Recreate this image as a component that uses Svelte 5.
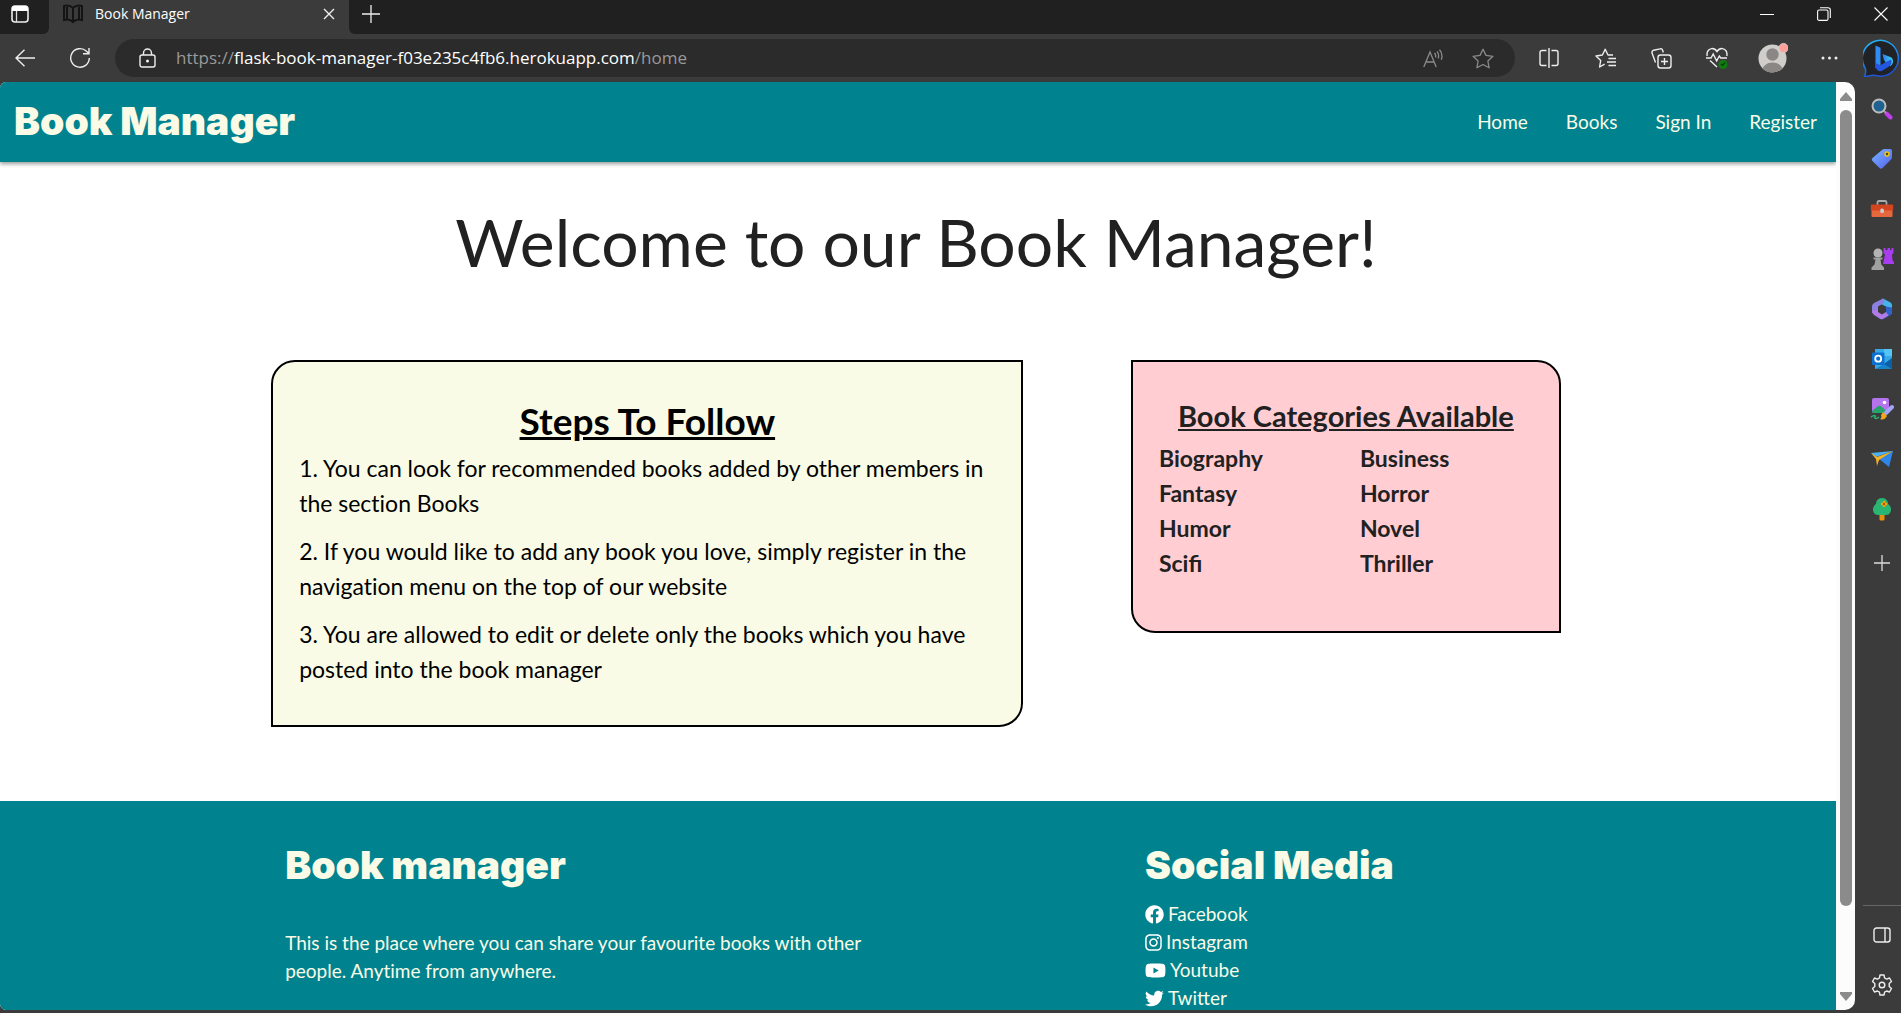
<script>
  const navLinks = ['Home', 'Books', 'Sign In', 'Register'];
  const steps = [
    '1. You can look for recommended books added by other members in the section Books',
    '2. If you would like to add any book you love, simply register in the navigation menu on the top of our website',
    '3. You are allowed to edit or delete only the books which you have posted into the book manager'
  ];
  const categories = ['Biography', 'Business', 'Fantasy', 'Horror', 'Humor', 'Novel', 'Scifi', 'Thriller'];
  const socials = [
    { name: 'Facebook', box: '0 0 512 512', width: 19, path: 'M504 256C504 119 393 8 256 8S8 119 8 256c0 124 91 226 209 245V328h-63v-72h63v-55c0-62 37-97 94-97 27 0 55 5 55 5v62h-31c-31 0-40 19-40 38v47h69l-11 72h-58v173c118-19 209-121 209-245z' },
    { name: 'Instagram', box: '0 0 448 512', width: 17, path: 'M224 141c-64 0-115 51-115 115s51 115 115 115 115-51 115-115-51-115-115-115zm0 190c-41 0-75-34-75-75s34-75 75-75 75 34 75 75-34 75-75 75zm146-194a27 27 0 1 1-54 0 27 27 0 0 1 54 0zm76 27c-2-36-10-68-36-94s-58-34-94-36c-37-2-148-2-185 0-36 2-67 10-94 36S3 128 1 164c-2 37-2 148 0 185 2 36 10 67 36 94s58 34 94 36c37 2 148 2 185 0 36-2 68-10 94-36s34-58 36-94c2-37 2-148 0-185zm-48 225c-8 19-23 34-42 42-29 11-99 9-132 9s-103 2-132-9c-19-8-34-23-42-42-11-29-9-99-9-133s-2-103 9-132c8-19 23-34 42-42 29-11 99-9 132-9s103-2 132 9c19 8 34 23 42 42 11 29 9 99 9 132s2 104-9 133z' },
    { name: 'Youtube', box: '0 0 576 512', width: 21, path: 'M549 124c-6-24-25-42-48-49-43-11-213-11-213-11S118 64 75 75c-23 7-42 25-48 49-12 43-12 132-12 132s0 90 12 133c6 23 25 41 48 47 43 12 213 12 213 12s171 0 213-12c23-6 42-24 48-47 12-43 12-133 12-133s0-89-12-132zM232 338V175l143 81-143 82z' },
    { name: 'Twitter', box: '0 0 512 512', width: 19, path: 'M459 152c0 4 0 9 0 14 0 138-105 298-298 298-59 0-114-17-161-47 8 1 16 1 25 1 49 0 94-16 130-45-46-1-85-31-98-72 7 1 13 1 20 1 9 0 19-1 27-3-48-10-84-52-84-103v-2c14 8 30 13 47 14-28-19-47-51-47-87 0-20 5-37 14-53 52 63 129 105 216 109-2-7-3-15-3-24 0-57 47-104 105-104 30 0 57 13 77 33 23-5 46-13 66-25-8 24-24 45-46 58 21-2 42-8 60-16-14 21-31 39-50 53z' }
  ];
</script>

<div class="window">
  <div class="tabstrip">
    <button class="strip-start" aria-label="Tab actions">
      <svg width="18" height="18" viewBox="0 0 18 18"><rect x="1" y="1" width="16" height="16" rx="3" fill="none" stroke="#eee" stroke-width="1.6" /><path d="M1 4a3 3 0 0 1 3-3h10a3 3 0 0 1 3 3v2H1z" fill="#fff" /><path d="M5.5 6v11" stroke="#ddd" stroke-width="1.3" /></svg>
    </button>
    <div class="tab">
      <svg width="20" height="20" viewBox="0 0 20 20" fill="none" stroke="#141414" stroke-width="2"><path d="M10 4v14M10 4C8 2 5 1 1 2v14c4-1 7 0 9 2 2-2 5-3 9-2V2c-4-1-7 0-9 2zM4 3v12M16 3v12" /></svg>
      <span>Book Manager</span>
      <button class="tab-close" aria-label="Close tab"><svg width="12" height="12" viewBox="0 0 12 12" stroke="#eee" stroke-width="1.4"><path d="M1 1l10 10M11 1L1 11" /></svg></button>
    </div>
    <div class="strip-end">
      <button class="new-tab" aria-label="New tab"><svg width="18" height="18" viewBox="0 0 18 18" stroke="#eee" stroke-width="1.3"><path d="M9 0v18M0 9h18" /></svg></button>
      <div class="controls">
        <button aria-label="Minimize"><svg width="14" height="14" viewBox="0 0 14 14" stroke="#fff"><path d="M0 7.5h14" /></svg></button>
        <button aria-label="Restore"><svg width="14" height="14" viewBox="0 0 14 14" fill="none" stroke="#fff" stroke-width="1.1"><rect x=".6" y="3" width="10.4" height="10.4" rx="1.5" /><path d="M3 .8h8a2.3 2.3 0 0 1 2.3 2.3v8" /></svg></button>
        <button aria-label="Close"><svg width="14" height="14" viewBox="0 0 14 14" stroke="#fff" stroke-width="1.1"><path d="M.5.5l13 13M13.5.5l-13 13" /></svg></button>
      </div>
    </div>
  </div>

  <div class="toolbar">
    <button aria-label="Back"><svg width="20" height="18" viewBox="0 0 20 18" fill="none" stroke="#eee" stroke-width="1.4"><path d="M20 9H1M9.500 .8L1 9l8.500 8.200" /></svg></button>
    <button aria-label="Refresh"><svg width="22" height="22" viewBox="0 0 22 22" fill="none" stroke="#eee" stroke-width="1.4"><path d="M20.300 11A9.300 9.300 0 1 1 17.500 4.300L20 6.500M20 1v5.800h-6" /></svg></button>
    <div class="address">
      <svg width="17" height="20" viewBox="0 0 17 20" fill="none" stroke="#eee" stroke-width="1.4"><rect x="1" y="7" width="15" height="12" rx="2" /><path d="M4.500 7V5a4 4 0 0 1 8 0v2" /><circle cx="8.500" cy="13" r=".8" fill="#eee" /></svg>
      <div class="url">https://<b>flask-book-manager-f03e235c4fb6.herokuapp.com</b>/home</div>
      <button aria-label="Read aloud"><svg width="20" height="19" viewBox="0 0 20 19" fill="none" stroke="#8a8a8a" stroke-width="1.3"><path d="M.8 18L7 3l6.200 15M3 13h8M11.500 4c1.200 1.200 1.400 2.800 1 4.500M14 2.500c1.700 2 2 4.500 1.200 7M16.500 .8c2.500 2.700 3 6.500 1.800 10" /></svg></button>
      <button aria-label="Add to favorites"><svg width="22" height="21" viewBox="0 0 22 21" fill="none" stroke="#8a8a8a" stroke-width="1.3" stroke-linejoin="round"><path d="M11 1.200l3 6.200 6.900.9-5 4.700 1.200 6.800-6.100-3.300-6.100 3.300L6.100 13l-5-4.700L8 7.400z" /></svg></button>
    </div>
    <div class="tools">
      <button aria-label="Split screen"><svg width="20" height="20" viewBox="0 0 20 20" fill="none" stroke="#eee" stroke-width="1.4"><path d="M7.500 2.500H3a2 2 0 0 0-2 2v11a2 2 0 0 0 2 2h4.500M12.500 2.500H17a2 2 0 0 1 2 2v11a2 2 0 0 1-2 2h-4.500M10 0v20" /></svg></button>
      <button aria-label="Favorites"><svg width="21" height="20" viewBox="0 0 21 20" fill="none" stroke="#eee" stroke-width="1.400" stroke-linejoin="round"><path d="M18 7h-5L10.200 1.200 7.400 7 1 8l4.700 4.500L4.600 19l5-2.800M13.500 10.500H21M12 14h9M13.500 17.500H21" /></svg></button>
      <button aria-label="Collections"><svg width="21" height="21" viewBox="0 0 21 21" fill="none" stroke="#eee" stroke-width="1.4"><rect x="7" y="7" width="13" height="13" rx="2.500" /><path d="M13.500 10v7M10 13.500h7M4.500 14.500L1.200 5.400a2.500 2.500 0 0 1 1.500-3.200L9 .9a2 2 0 0 1 2.600 1.300L12.300 4.500" /></svg></button>
      <button aria-label="Browser essentials"><svg width="22" height="22" viewBox="0 0 22 22" fill="none" stroke="#eee" stroke-width="1.400"><path d="M1.200 9C.5 5.500 2 2 5.500 1.600 8 1.300 10 3 11 4.500 12 3 14 1.300 16.500 1.600 20 2 21.500 5.500 20.800 9M0 11h5l2.200-4 3.500 7 2.600-5 1.500 2H21M4 13.500l7 6.500" /><circle cx="17" cy="17.500" r="4.500" fill="#0f7b10" stroke="none" /><path d="M15 17l1.500 1.500 2.700-3" stroke="#063f06" stroke-width="1.200" /></svg></button>
      <button aria-label="Profile"><svg width="30" height="30" viewBox="0 0 30 30"><defs><clipPath id="face"><circle cx="14.500" cy="15.500" r="14" /></clipPath></defs><g clip-path="url(#face)"><rect width="30" height="30" fill="#d0cecb" /><circle cx="14.500" cy="11.500" r="6.200" fill="#8a8784" /><ellipse cx="14.500" cy="28" rx="10.500" ry="8.500" fill="#8a8784" /></g><circle cx="25.500" cy="5" r="4.500" fill="#ff9f97" stroke="#d8cdca" /></svg></button>
      <button aria-label="Settings and more"><svg width="17" height="4" viewBox="0 0 17 4" fill="#eee"><circle cx="2" cy="2" r="1.500" /><circle cx="8.500" cy="2" r="1.500" /><circle cx="15" cy="2" r="1.500" /></svg></button>
    </div>
    <button class="bing" aria-label="Bing chat">
      <svg width="38" height="39" viewBox="0 0 38 39"><defs><linearGradient id="ring" x2=".3" y2="1"><stop stop-color="#25bdf5" /><stop offset="1" stop-color="#1d55d8" /></linearGradient><linearGradient id="bee" x2="1" y2="0"><stop stop-color="#2f7df2" /><stop offset="1" stop-color="#37d4ee" /></linearGradient></defs><path d="M1.500 37.300c1-2 1.500-5 .8-8A18 18 0 1 1 19 37.300c-4 0-6-1.300-9-1.100-3 .2-5 1.500-8.500 1.100z" fill="#202225" stroke="url(#ring)" stroke-width="1.500" /><path d="M12.500 6.500l5 2.300v17.500l-5 3z" fill="#2f8cf4" /><path d="M19.500 15l8.500 3.200c2.800 2 2.700 6.800-.7 8.800l-4.800-3.700-1.700-2.800z" fill="url(#bee)" /><path d="M12.500 24l5 2.300 5.500-3.300 5-2.500c1.500 3 0 5.600-1.700 6.700l-6.800 4.400c-5 2.200-7-1.600-7-7.600z" fill="#2457e0" /></svg>
    </button>
  </div>

  <div class="body">
    <div class="page">
      <header>
        <a class="logo" href="/home">Book Manager</a>
        <nav>{#each navLinks as link}<a href="/{link}">{link}</a>{/each}</nav>
      </header>
      <main>
        <h1>Welcome to our Book Manager!</h1>
        <div class="cards">
          <section class="steps">
            <h2>Steps To Follow</h2>
            {#each steps as step}<p>{step}</p>{/each}
          </section>
          <section class="categories">
            <h3>Book Categories Available</h3>
            <ul>{#each categories as category}<li>{category}</li>{/each}</ul>
          </section>
        </div>
      </main>
      <footer>
        <div class="columns">
          <div class="about">
            <h4>Book manager</h4>
            <p>This is the place where you can share your favourite books with other people. Anytime from anywhere.</p>
          </div>
          <div class="social">
            <h4>Social Media</h4>
            <ul>
              {#each socials as social}
                <li><a href="/{social.name}"><svg width={social.width} height="19" viewBox={social.box} fill="#fff"><path d={social.path} /></svg>{social.name}</a></li>
              {/each}
            </ul>
          </div>
        </div>
      </footer>
    </div>

    <div class="scrollbar">
      <svg width="12" height="9" viewBox="0 0 12 9"><path d="M6 0l6 7v2H0V7z" fill="#8b8b8b" /></svg>
      <div class="thumb"></div>
      <svg width="12" height="9" viewBox="0 0 12 9"><path d="M6 9l6-7V0H0v2z" fill="#8b8b8b" /></svg>
    </div>

    <aside>
      <button aria-label="Search"><svg width="22" height="22" viewBox="0 0 22 22"><path d="M15.500 15.500l4 4" stroke="#c13df0" stroke-width="4" stroke-linecap="round" /><path d="M12 12l3 3" stroke="#999" stroke-width="2" /><circle cx="8" cy="8" r="6.500" fill="#1f6290" stroke="#bdbdbd" stroke-width="2" /></svg></button>
      <button aria-label="Shopping"><svg width="22" height="22" viewBox="0 0 22 22"><defs><linearGradient id="tag" x2="1" y2="1"><stop stop-color="#79b7ff" /><stop offset="1" stop-color="#5360f0" /></linearGradient></defs><path d="M11 2q1-1 2.500-1H19q2 0 2 2v6q0 1.500-1 2.500L11.500 20q-1.500 1.500-3 0L1.500 13q-1.500-1.500 0-3z" fill="url(#tag)" /><circle cx="16" cy="6" r="2" fill="#444" stroke="#f2c300" stroke-width="1.500" /></svg></button>
      <button aria-label="Tools"><svg width="24" height="20" viewBox="0 0 24 20"><path d="M7.500 6V3.500q0-1.500 1.500-1.500h6q1.500 0 1.500 1.500V6" fill="none" stroke="#aaa" stroke-width="1.800" /><rect x="1.500" y="6" width="21" height="12" rx="1" fill="#e8683e" /><rect x=".8" y="5.500" width="22.400" height="6" rx="1.200" fill="#d2451e" /><rect x="10.300" y="9.500" width="3.600" height="4.500" rx="1.500" fill="#ccc" /></svg></button>
      <button aria-label="Games"><svg width="24" height="24" viewBox="0 0 24 24"><path d="M13.500 1h2v2h2V1h2.500v2h1.500V1h2v5l-1.500 1.500.5 6 1.500 1.500v2H13l2-9.500L13.500 6z" fill="#a83df0" /><circle cx="8" cy="6" r="4.500" fill="#b3b3b3" /><path d="M3.500 10.500h9v2h-2l.8 5 2.700 3V23H1.500v-2.500l3-3 1-5h-2z" fill="#a0a0a0" /></svg></button>
      <button aria-label="Microsoft 365"><svg width="22" height="22" viewBox="0 0 22 22"><path d="M12 .5l7.500 4Q21 5.500 21 7.500V16l-6-3V8.500L8 5z" fill="#45b4ee" /><path d="M12 .5L3 5Q1 6 1 8.500V15q4 0 6-3V8.500l6-3.500q1-3-1-4.500z" fill="#8b7fe0" /><path d="M15 8.500l6 1V14q0 2-1.500 3l-7 4q-1.500.8-3 0L7 19.500l8-5z" fill="#2f62c9" /><path d="M1 12.500q0 3.500 2 4.500l6.500 4q1.500.5 3-.5l5-3L15 14l-4 2.500-4-2.500v-3q-2 2-6 1.500z" fill="#b07be8" /></svg></button>
      <button aria-label="Outlook"><svg width="22" height="22" viewBox="0 0 22 22"><path d="M4 1h17v20H4z" fill="#36a9e9" /><path d="M13 1h8v7h-8z" fill="#54c5f5" /><path d="M21 10v11H4l9-5z" fill="#1783c9" /><path d="M21 10v11l-8-5z" fill="#0d5fa3" /><rect x="1" y="4.500" width="12.500" height="12.500" rx="1" fill="#0b70cf" /><circle cx="7.200" cy="10.700" r="3" fill="none" stroke="#fff" stroke-width="1.800" /></svg></button>
      <button aria-label="Image creator"><svg width="24" height="24" viewBox="0 0 24 24"><rect x="2" y="1" width="17" height="15" rx="2" fill="#b573ee" /><path d="M2 14l6-5q2-1 4 1l6 6H4q-2 0-2-2z" fill="#25a36a" /><circle cx="14.500" cy="5.500" r="1.800" fill="#fff" /><path d="M1 20c3-2 5-2 4 0s2 2 4 0" fill="none" stroke="#27b071" stroke-width="1.600" /><path d="M16 16l6-6" stroke="#a5a4f4" stroke-width="4" stroke-linecap="round" /><path d="M13 15l4 4q-3 5-7 3 2-1 1-4z" fill="#f3a51c" /></svg></button>
      <button aria-label="Drop"><svg width="24" height="18" viewBox="0 0 24 18"><path d="M23 1L1 3l5 4z" fill="#4cb1f3" /><path d="M23 1L8 8l11 9z" fill="#2f86e8" /><path d="M1 3l5 6 1 7 2-6L23 1 7 7z" fill="#f5b321" /></svg></button>
      <button aria-label="Tree"><svg width="20" height="24" viewBox="0 0 20 24"><rect x="7.500" y="17" width="5" height="6.500" rx="1" fill="#e9900c" /><path d="M10 1c4 0 6 3 6 6 3 2 4 6 2 9q-1 2-4 2H6q-3 0-4-2c-2-3-1-7 2-9 0-3 2-6 6-6z" fill="#2bb573" /><path d="M12 5v4M10 7h4" stroke="#f4a30c" stroke-width="2.500" stroke-linecap="round" /><circle cx="12" cy="7" r="1.200" fill="#b65204" /></svg></button>
      <button class="add" aria-label="Customize"><svg width="16" height="16" viewBox="0 0 16 16" stroke="#ddd" stroke-width="1.300"><path d="M8 0v16M0 8h16" /></svg></button>
      <div class="aside-end">
        <button aria-label="Hide sidebar"><svg width="18" height="16" viewBox="0 0 18 16" fill="none" stroke="#eee" stroke-width="1.400"><rect x="1" y="1" width="16" height="14" rx="2.500" /><path d="M12 1v14" /></svg></button>
        <button aria-label="Settings"><svg width="22" height="22" viewBox="0 0 22 22" fill="none" stroke="#eee" stroke-width="1.400" stroke-linejoin="round"><path d="M9 1h4l.6 3 2 1.100L18.500 4l2 3.500-2.300 2v3l2.300 2-2 3.500-2.900-1-2 1.100L13 21H9l-.6-2.900-2-1.100-2.900 1-2-3.500 2.300-2v-3l-2.300-2 2-3.500 2.900 1.100 2-1.100z" /><circle cx="11" cy="11" r="2.800" /></svg></button>
      </div>
    </aside>
  </div>
</div>

<style>
  :global(body) { margin: 0; background: #3b3b3b; }
  .window { height: 100vh; display: flex; flex-direction: column; overflow: hidden; background: #3b3b3b; font-family: 'Open Sans', 'Noto Sans', sans-serif; }
  .window * { box-sizing: border-box; }
  button { border: 0; padding: 0; background: none; display: flex; align-items: center; justify-content: center; flex: none; }
  svg { flex: none; display: block; }
  h1, h2, h3, h4, p, ul { margin: 0; padding: 0; font-weight: 400; }
  ul { list-style: none; }
  a { text-decoration: none; color: inherit; }

  .tabstrip { display: flex; height: 34px; flex: none; }
  .strip-start { width: 49px; background: #202020; border-bottom-right-radius: 6px; padding: 0 9px 6px 0; }
  .tab { width: 300px; display: flex; align-items: center; padding: 0 14px 7px; color: #fff; font-size: 14px; gap: 12px; }
  .tab span { flex: 1; }
  .strip-end { flex: 1; display: flex; justify-content: space-between; background: #202020; border-bottom-left-radius: 6px; padding-bottom: 7px; }
  .new-tab { width: 44px; }
  .controls { display: flex; }
  .controls button { width: 57px; }
  .controls button:last-child { width: 49px; padding-left: 8px; }

  .toolbar { display: flex; height: 48px; flex: none; align-items: center; }
  .toolbar > button { width: 60px; height: 38px; }
  .toolbar > button:first-child { width: 50px; }
  .address { flex: 1; height: 38px; border-radius: 19px; background: #2b2b2b; display: flex; align-items: center; margin-left: 5px; padding: 0 7px 0 24px; }
  .url { flex: 1; padding: 0 0 2px 20px; font-size: 17px; color: #999; white-space: nowrap; }
  .url b { font-weight: 400; color: #fff; }
  .address button { width: 50px; }
  .tools { display: flex; padding-left: 6px; }
  .tools button { width: 56px; }
  .toolbar > .bing { width: 44px; justify-content: flex-end; }

  .body { flex: 1; min-height: 0; display: flex; padding-bottom: 3px; }
  .page { flex: 1; min-width: 0; overflow: hidden; background: #fff; border-radius: 6px 0 0 6px; font-family: Lato, sans-serif; display: flex; flex-direction: column; }
  header { height: 80px; flex: none; background: #00838f; color: #f9fbe7; display: flex; align-items: center; justify-content: space-between; padding-bottom: 2px; box-shadow: 0 2px 4px rgba(0, 0, 0, .4); }
  .logo, h4 { font-family: Inter, Lato, sans-serif; font-size: 39px; line-height: 40px; font-weight: 900; }
  .logo { padding-left: 14px; }
  nav { display: flex; font-size: 19px; }
  nav a { padding: 0 19px; }
  main { flex: none; padding: 40px 4px 74px 0; }
  h1 { text-align: center; font-size: 66px; line-height: 80px; color: #212121; margin-bottom: 78px; }
  .cards, .columns { width: 70.4%; margin: 0 auto; display: grid; grid-template-columns: repeat(12, 1fr); align-items: start; }
  .steps, .categories { border: 2px solid #000; padding: 38px 26px; }
  .steps { grid-column: span 7; background: #f9fbe7; border-radius: 24px 0; color: #000; }
  .steps h2 { text-align: center; font-size: 37px; line-height: 42px; font-weight: 700; text-decoration: underline; margin-bottom: 9px; }
  .steps p { font-size: 23px; line-height: 35px; font-variant-ligatures: none; }
  .steps p + p { margin-top: 13px; }
  .categories { grid-column: 9 / span 4; background: #ffcdd2; border-radius: 0 24px; color: #212121; padding-bottom: 50px; }
  .categories h3 { text-align: center; font-size: 29px; line-height: 32px; font-weight: 700; text-decoration: underline; margin-bottom: 9px; }
  .categories ul { display: grid; grid-template-columns: 1fr 1fr; column-gap: 28px; font-size: 23px; line-height: 35px; font-weight: 700; }
  footer { flex: none; background: #00838f; color: #f9fbe7; padding: 44px 4px 20px 0; font-size: 19px; line-height: 28px; }
  .about { grid-column: span 6; padding: 0 14px; }
  .social { grid-column: 9 / span 4; padding: 0 14px; }
  h4 { margin-bottom: 15px; }
  .about p { padding-top: 29px; font-variant-ligatures: none; }
  .social a { display: flex; align-items: center; gap: 4px; }

  .scrollbar { width: 19px; flex: none; background: #fcfcfc; border-radius: 0 10px 10px 0; display: flex; flex-direction: column; align-items: center; padding: 10px 0 9px; gap: 9px; }
  .thumb { width: 12px; flex: 1; border-radius: 6px; background: #8b8b8b; margin-bottom: 77px; }
  aside { width: 46px; flex: none; display: flex; flex-direction: column; padding: 2px 0 0 8px; }
  aside button { height: 50px; width: 38px; }
  aside .add { margin-top: 4px; }
  .aside-end { margin-top: auto; border-top: 1px solid #666; padding-top: 4px; }
</style>
